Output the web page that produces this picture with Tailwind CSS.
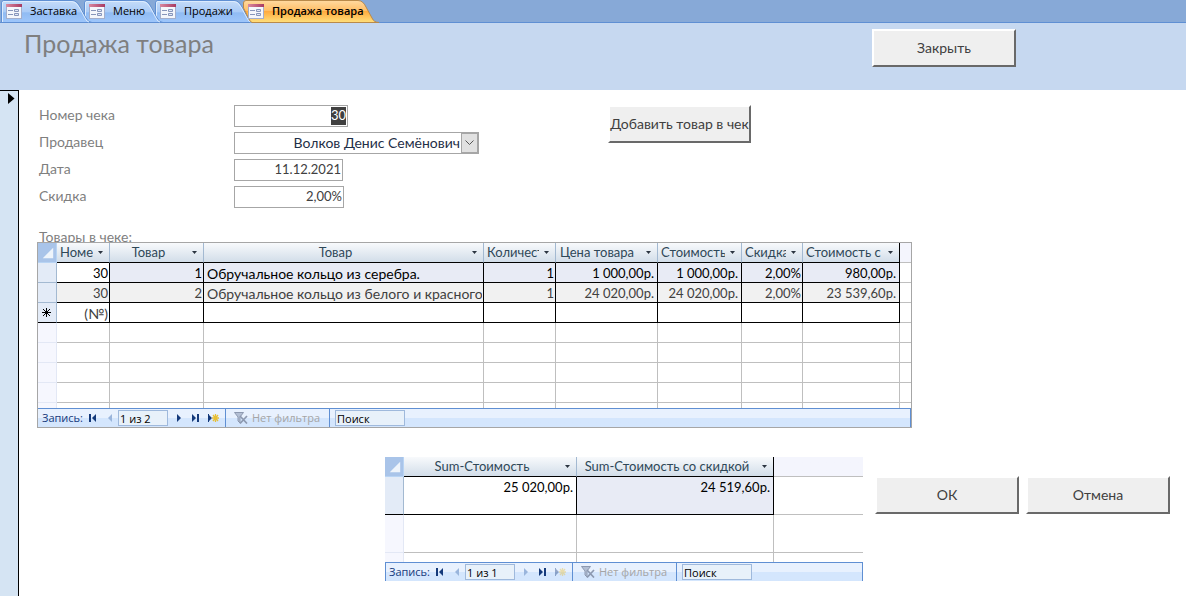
<!DOCTYPE html>
<html lang="ru">
<head>
<meta charset="utf-8">
<title>Продажа товара</title>
<script src="https://cdn.jsdelivr.net/npm/@tailwindcss/browser@4"></script>
</head>
<body class="min-h-screen flex flex-col bg-white text-sm text-[#404040] font-['Lato','Open_Sans',sans-serif]">

<svg class="absolute w-0 h-0" aria-hidden="true">
  <defs>
    <linearGradient id="blue" x1="0" y1="0" x2="0" y2="1"><stop offset="0" stop-color="#c6dcf8"/><stop offset=".5" stop-color="#a9cbf7"/><stop offset=".55" stop-color="#90bbf3"/><stop offset="1" stop-color="#9fc7fb"/></linearGradient>
    <linearGradient id="gold" x1="0" y1="0" x2="0" y2="1"><stop offset="0" stop-color="#ffd9a0"/><stop offset=".45" stop-color="#ffc069"/><stop offset=".5" stop-color="#ffab3f"/><stop offset="1" stop-color="#ffe07c"/></linearGradient>
    <linearGradient id="pink" x1="0" y1="0" x2="1" y2="0"><stop offset="0" stop-color="#d9889f"/><stop offset="1" stop-color="#a83a62"/></linearGradient>
  </defs>
  <symbol id="form" viewBox="0 0 16 15">
    <rect x=".5" y=".5" width="15" height="14" fill="#f4f6fb" stroke="#a3aecb"/>
    <rect x="0" y="0" width="16" height="3" fill="url(#pink)"/>
    <path d="M2 6.500h5M2 10.500h5" stroke="#8795ba"/>
    <path d="M8.500 5.500h4v2h-4zM8.500 9.500h4v2h-4z" fill="#dfe6f5" stroke="#8795ba"/>
  </symbol>
  <symbol id="drop" viewBox="0 0 7 4"><path d="M1 0h5L3.500 3z" fill="#2b3440"/></symbol>
  <symbol id="first" viewBox="0 0 7 8"><path d="M0 0h2v8H0zM7 0v8L3 4z" fill="currentColor"/></symbol>
  <symbol id="prev" viewBox="0 0 7 8"><path d="M5 0v8L1 4z" fill="currentColor"/></symbol>
  <symbol id="next" viewBox="0 0 7 8"><path d="M1 0v8l4-4z" fill="currentColor"/></symbol>
  <symbol id="last" viewBox="0 0 7 8"><path d="M5 0h2v8H5zM0 0v8l4-4z" fill="currentColor"/></symbol>
  <symbol id="new" viewBox="0 0 11 8"><path d="M0 0h1v8H0zM1 1v6l3-3z" fill="currentColor"/><path d="M7.500 0v8M4 4h7M5 1l5 6M10 1L5 7" stroke="#e8bf35" stroke-width="1.300"/></symbol>
  <symbol id="filter" viewBox="0 0 14 12"><path d="M.5.500h9L6 5v6L4 9V5z" fill="#b3bfd4" stroke="#8d99b0"/><path d="M6 4l7 7.500M13 4l-7 7.500" stroke="#8d99b0" stroke-width="1.700"/></symbol>
  <symbol id="corner" viewBox="0 0 19 20"><path d="M16 5v11H5z" fill="#eef4fb"/></symbol>
</svg>

<nav class="h-[23px] flex bg-[#87a9d7] border-b border-[#5f8fd3] text-[11px] text-black font-['Open_Sans','Noto_Sans',sans-serif]">
  <button class="relative z-30 ml-px w-[83px] h-[22px] flex items-center gap-2 pl-[5px]">
    <svg class="absolute left-0 top-0 w-[91px] h-[23px]" viewBox="0 0 91 23"><path d="M.5 23V3Q.5.500 3 .5H71Q76 .5 79 7L85 18Q87 22.500 91 22.500H.5Z" fill="url(#blue)" stroke="#5f8fd3"/><path d="M1.500 22V3Q1.500 1.500 3 1.500H71Q75 1.500 78 7L84 18Q86 22 88 22" fill="none" stroke="#dcebfd"/></svg>
    <svg class="relative w-4 h-[15px] shrink-0"><use href="#form"/></svg><span class="relative">Заставка</span>
  </button>
  <button class="relative z-20 w-[71px] h-[22px] flex items-center gap-2 pl-[5px]">
    <svg class="absolute left-0 top-0 w-[79px] h-[23px]" viewBox="0 0 79 23"><path d="M.5 23V3Q.5.500 3 .5H59Q64 .5 67 7L73 18Q75 22.500 79 22.500H.5Z" fill="url(#blue)" stroke="#5f8fd3"/><path d="M1.500 22V3Q1.500 1.500 3 1.500H59Q63 1.500 66 7L72 18Q74 22 76 22" fill="none" stroke="#dcebfd"/></svg>
    <svg class="relative w-4 h-[15px] shrink-0"><use href="#form"/></svg><span class="relative">Меню</span>
  </button>
  <button class="relative z-10 w-[88px] h-[22px] flex items-center gap-2 pl-[5px]">
    <svg class="absolute left-0 top-0 w-[98px] h-[23px]" viewBox="0 0 98 23"><path d="M.5 23V3Q.5.500 3 .5H79Q84 .5 87 7L93 18Q95 22.500 98 22.500H.5Z" fill="url(#blue)" stroke="#5f8fd3"/><path d="M1.500 22V3Q1.500 1.500 3 1.500H79Q83 1.500 86 7L92 18Q94 22 96 22" fill="none" stroke="#dcebfd"/></svg>
    <svg class="relative w-4 h-[15px] shrink-0"><use href="#form"/></svg><span class="relative">Продажи</span>
  </button>
  <button class="relative z-40 w-[136px] h-[22px] flex items-center gap-2 pl-[5px] font-semibold">
    <svg class="absolute left-0 top-0 w-[136px] h-[23px]" viewBox="0 0 136 23"><path d="M9 22.500Q7 22 5 17L.5 8V3Q.5.500 3 .5H115Q120 .5 123 7L129 18Q131 22.500 136 22.500Z" fill="url(#gold)" stroke="#b98a4a"/></svg>
    <svg class="relative w-4 h-[15px] shrink-0"><use href="#form"/></svg><span class="relative whitespace-nowrap">Продажа товара</span>
  </button>
</nav>

<header class="h-[67px] flex items-start justify-between bg-[#c6d8f0] pl-6 pr-[170px] pt-[6px]">
  <h1 class="text-[25px] leading-7 text-[#7f7f7f]">Продажа товара</h1>
  <button class="w-[144px] h-[38px] bg-[#efefef] border-2 border-t-white border-l-white border-r-[#696969] border-b-[#696969]">Закрыть</button>
</header>

<div class="flex-1 flex">
  <aside class="w-[19px] shrink-0 bg-[#d5e4f3] border-t border-r border-black pt-[2px] pl-2">
    <svg class="w-[7px] h-[11px]" viewBox="0 0 7 11"><path d="M0 0v11l6.500-5.500z" fill="#000"/></svg>
  </aside>

  <main class="flex-1 min-w-0 pt-[15px]">
    <form class="flex items-start pl-5">
      <div class="grid grid-cols-[195px_245px] auto-rows-[22px] gap-y-[5px] items-center text-[#7f7f7f] w-[569px] [&>label]:pb-[2px]">
        <label for="num">Номер чека</label>
        <div class="w-[114px] h-[22px] border border-[#a6a6a6] flex justify-end items-center pr-px"><input id="num" value="30" class="w-[15px] h-[18px] pb-px bg-[#404040] text-[13px] text-white text-right outline-none"></div>
        <label for="seller">Продавец</label>
        <div class="h-[22px] border border-[#a6a6a6] flex relative">
          <select id="seller" class="appearance-none flex-1 pr-[18px] pb-px text-right [text-align-last:right] text-[#1f2f47] outline-none"><option>Волков Денис Семёнович</option></select>
          <span class="absolute right-0 top-0 w-[17px] h-5 bg-[#e1e1e1] border border-[#a6a6a6] flex items-center justify-center pointer-events-none"><svg class="w-[9px] h-[6px]" viewBox="0 0 9 6"><path d="M.5.500l4 4 4-4" fill="none" stroke="#555"/></svg></span>
        </div>
        <label for="date">Дата</label>
        <input id="date" value="11.12.2021" class="w-[109px] h-[22px] border border-[#a6a6a6] text-[13px] text-right pr-px pb-[2px] text-[#404040]">
        <label for="disc">Скидка</label>
        <input id="disc" value="2,00%" class="w-[110px] h-[22px] border border-[#a6a6a6] text-[13px] text-right pr-px pb-[2px] text-[#404040]">
      </div>
      <button type="button" class="w-[143px] h-[38px] bg-[#efefef] border-2 border-t-white border-l-white border-r-[#696969] border-b-[#696969] whitespace-nowrap flex items-center justify-center">Добавить товар в чек</button>
    </form>

    <h2 class="mt-5 ml-5 h-[14px] leading-[18px] text-[#7f7f7f]">Товары в чеке:</h2>

    <section class="relative bg-white ml-[18px] mr-4 max-w-[875px] border border-[#a6a6a6]">
      <div class="h-[165px] overflow-hidden">
        <table class="w-full table-fixed border-separate border-spacing-0 leading-[19px] whitespace-nowrap [&_td]:p-0 [&_th]:p-0 [&_tr]:h-5 [&_td]:border-r [&_td]:border-b [&_th]:border-r [&_th]:border-b [&_th]:font-normal [&_td]:overflow-hidden [&_td]:text-right [&_td]:text-[13px] [&_td]:leading-[17px] [&_td]:pr-px [&_td]:pt-[2px]">
          <colgroup><col class="w-[19px]"><col class="w-[53px]"><col class="w-[94px]"><col class="w-[280px]"><col class="w-[72px]"><col class="w-[102px]"><col class="w-[84px]"><col class="w-[61px]"><col class="w-[97px]"><col></colgroup>
          <thead class="text-[13px] text-[#2f4858]">
            <tr class="[&>th]:border-b-black [&>th]:border-r-[#a3b9d1] [&>th]:bg-linear-to-b [&>th]:from-[#f8fafc] [&>th]:to-[#d2dde9]">
              <th class="!border-[#b8d4f4] !from-[#a9c4e9] !to-[#a9c4e9]"><svg class="w-[18px] h-[19px]"><use href="#corner"/></svg></th>
              <th><div class="flex items-center pl-[3px] pr-[5px]"><span class="flex-1 overflow-hidden text-left">Номер</span><svg class="ml-1 shrink-0 w-[7px] h-1"><use href="#drop"/></svg></div></th>
              <th><div class="flex items-center pr-[5px]"><span class="flex-1">Товар</span><svg class="ml-1 shrink-0 w-[7px] h-1"><use href="#drop"/></svg></div></th>
              <th><div class="flex items-center pr-[5px]"><span class="flex-1">Товар</span><svg class="ml-1 shrink-0 w-[7px] h-1"><use href="#drop"/></svg></div></th>
              <th><div class="flex items-center pl-[3px] pr-[5px]"><span class="flex-1 overflow-hidden text-left">Количество</span><svg class="ml-1 shrink-0 w-[7px] h-1"><use href="#drop"/></svg></div></th>
              <th><div class="flex items-center pl-[4px] pr-[5px]"><span class="flex-1 overflow-hidden text-left">Цена товара</span><svg class="ml-1 shrink-0 w-[7px] h-1"><use href="#drop"/></svg></div></th>
              <th><div class="flex items-center pl-[3px] pr-[5px]"><span class="flex-1 overflow-hidden text-left">Стоимость</span><svg class="ml-1 shrink-0 w-[7px] h-1"><use href="#drop"/></svg></div></th>
              <th><div class="flex items-center pl-[3px] pr-[5px]"><span class="flex-1 overflow-hidden text-left">Скидка</span><svg class="ml-1 shrink-0 w-[7px] h-1"><use href="#drop"/></svg></div></th>
              <th class="!border-r-black"><div class="flex items-center pl-[3px] pr-[5px]"><span class="flex-1 overflow-hidden text-left">Стоимость с</span><svg class="ml-1 shrink-0 w-[7px] h-1"><use href="#drop"/></svg></div></th>
              <th class="!border-r-0 !border-b-[#bfbfbf] !from-[#f4f5fd] !to-[#f4f5fd]"></th>
            </tr>
          </thead>
          <tbody class="[&_td]:border-black [&_td:first-child]:border-b-[#a3b9d1] [&_td:first-child]:border-r-[#a3b9d1] [&_td:first-child]:bg-[#e3ebf7] [&_td:last-child]:border-r-0 [&_td:last-child]:border-b-[#bfbfbf] [&_td:last-child]:bg-white">
            <tr class="text-black bg-[#e8ebf5]"><td></td><td class="bg-white">30</td><td>1</td><td><div class="pl-[3px] text-sm leading-4 text-left overflow-hidden">Обручальное кольцо из серебра.</div></td><td>1</td><td class="!pr-[3px]">1 000,00р.</td><td class="!pr-[3px]">1 000,00р.</td><td>2,00%</td><td class="!pr-[3px]">980,00р.</td><td></td></tr>
            <tr class="bg-[#f1f1f1]"><td></td><td>30</td><td>2</td><td><div class="pl-[3px] text-sm leading-4 text-left overflow-hidden">Обручальное кольцо из белого и красного золота</div></td><td>1</td><td class="!pr-[3px]">24 020,00р.</td><td class="!pr-[3px]">24 020,00р.</td><td>2,00%</td><td class="!pr-[3px]">23 539,60р.</td><td></td></tr>
            <tr><td class="!border-b-black !pt-0"><svg class="mx-auto w-[9px] h-[9px]" viewBox="0 0 9 9"><path d="M4.500 0v9M0 4.500h9M1 1l7 7M8 1L1 8" stroke="#000"/></svg></td><td class="!text-sm !leading-4">(№)</td><td></td><td></td><td></td><td></td><td></td><td></td><td></td><td></td></tr>
          </tbody>
          <tbody class="[&_td]:border-[#bfbfbf] [&_td:first-child]:border-[#e3e8f5] [&_td:first-child]:bg-[#f6f7fe] [&_td:last-child]:border-r-0">
            <tr><td></td><td></td><td></td><td></td><td></td><td></td><td></td><td></td><td></td><td></td></tr>
            <tr><td></td><td></td><td></td><td></td><td></td><td></td><td></td><td></td><td></td><td></td></tr>
            <tr><td></td><td></td><td></td><td></td><td></td><td></td><td></td><td></td><td></td><td></td></tr>
            <tr><td></td><td></td><td></td><td></td><td></td><td></td><td></td><td></td><td></td><td></td></tr>
            <tr><td></td><td></td><td></td><td></td><td></td><td></td><td></td><td></td><td></td><td></td></tr>
          </tbody>
        </table>
      </div>
      <div class="h-[19px] flex items-stretch border-t border-r border-[#5f8fd3] bg-linear-to-b from-[#e8f1fe] from-50% to-[#d4e6fd] to-50% text-[11px] font-['Open_Sans','Noto_Sans',sans-serif]">
        <div class="w-[188px] flex items-center border-r border-[#5f8fd3] pl-[4px] text-[#153a7b]">
          <span class="w-[47px]">Запись:</span>
          <button class="w-[18px]" aria-label="Первая"><svg class="w-[7px] h-2"><use href="#first"/></svg></button>
          <button class="w-[11px] text-[#9ab5dc]" aria-label="Предыдущая"><svg class="w-[7px] h-2"><use href="#prev"/></svg></button>
          <input value="1 из 2" aria-label="Номер записи" class="w-[50px] h-4 bg-[#e8f1fa] border border-[#9fb9dc] pl-px text-black">
          <button class="ml-2 w-4" aria-label="Следующая"><svg class="w-[7px] h-2"><use href="#next"/></svg></button>
          <button class="w-4" aria-label="Последняя"><svg class="w-[7px] h-2"><use href="#last"/></svg></button>
          <button aria-label="Новая"><svg class="w-[11px] h-2"><use href="#new"/></svg></button>
        </div>
        <button class="w-[104px] flex items-center gap-1 border-r border-[#5f8fd3] pl-2 text-[#a5a5a5] whitespace-nowrap"><svg class="w-[14px] h-3 shrink-0"><use href="#filter"/></svg>Нет фильтра</button>
        <input value="Поиск" aria-label="Поиск" class="ml-[5px] mt-px w-[70px] h-4 bg-[#e8f1fa] border border-[#9fb9dc] pl-px text-black">
      </div>
    </section>

    <div class="mt-[29px] ml-[366px] flex items-start">
      <section class="w-[478px]">
        <div class="h-[105px] overflow-hidden">
          <table class="w-full table-fixed border-separate border-spacing-0 leading-[19px] whitespace-nowrap [&_td]:p-0 [&_th]:p-0 [&_td]:h-[38px] [&_th]:h-5 [&_td]:border-r [&_td]:border-b [&_th]:border-r [&_th]:border-b [&_th]:font-normal [&_td]:align-top [&_td]:text-right [&_td]:text-[13px]">
            <colgroup><col class="w-[19px]"><col class="w-[173px]"><col class="w-[197px]"><col></colgroup>
            <thead class="text-[13px] text-[#2f4858]">
              <tr class="[&>th]:border-b-black [&>th]:border-r-[#a3b9d1] [&>th]:bg-linear-to-b [&>th]:from-[#f8fafc] [&>th]:to-[#d2dde9]">
                <th class="!border-[#b8d4f4] !from-[#a9c4e9] !to-[#a9c4e9]"><svg class="w-[18px] h-[19px]"><use href="#corner"/></svg></th>
                <th><div class="flex items-center pr-[5px]"><span class="flex-1">Sum-Стоимость</span><svg class="ml-1 shrink-0 w-[7px] h-1"><use href="#drop"/></svg></div></th>
                <th class="!border-r-black"><div class="flex items-center pr-[5px]"><span class="flex-1">Sum-Стоимость со скидкой</span><svg class="ml-1 shrink-0 w-[7px] h-1"><use href="#drop"/></svg></div></th>
                <th class="!border-r-0 !border-b-[#bfbfbf] !from-[#f4f5fd] !to-[#f4f5fd]"></th>
              </tr>
            </thead>
            <tbody class="text-black">
              <tr><td class="bg-[#e3ebf7] border-r-[#a3b9d1] border-b-black"></td><td class="border-black !pr-[3px]"><div class="pt-px">25 020,00р.</div></td><td class="border-black bg-[#e8ebf5] !pr-[3px]"><div class="pt-px">24 519,60р.</div></td><td class="border-[#bfbfbf] !border-r-0"></td></tr>
            </tbody>
            <tbody class="[&_td]:border-[#bfbfbf] [&_td:first-child]:border-[#e3e8f5] [&_td:first-child]:bg-[#f6f7fe] [&_td:last-child]:border-r-0">
              <tr><td></td><td></td><td></td><td></td></tr>
              <tr><td></td><td></td><td></td><td></td></tr>
            </tbody>
          </table>
        </div>
        <div class="h-[19px] flex items-stretch border-t border-x border-[#5f8fd3] bg-linear-to-b from-[#e8f1fe] from-50% to-[#d4e6fd] to-50% text-[11px] font-['Open_Sans','Noto_Sans',sans-serif]">
          <div class="w-[187px] flex items-center border-r border-[#5f8fd3] pl-[3px] text-[#153a7b]">
            <span class="w-[47px]">Запись:</span>
            <button class="w-[18px]" aria-label="Первая"><svg class="w-[7px] h-2"><use href="#first"/></svg></button>
            <button class="w-[11px] text-[#9ab5dc]" aria-label="Предыдущая"><svg class="w-[7px] h-2"><use href="#prev"/></svg></button>
            <input value="1 из 1" aria-label="Номер записи" class="w-[50px] h-4 bg-[#e8f1fa] border border-[#9fb9dc] pl-px text-black">
            <button class="ml-2 w-4 text-[#9ab5dc]" aria-label="Следующая"><svg class="w-[7px] h-2"><use href="#next"/></svg></button>
            <button class="w-4" aria-label="Последняя"><svg class="w-[7px] h-2"><use href="#last"/></svg></button>
            <button class="opacity-40" aria-label="Новая"><svg class="w-[11px] h-2"><use href="#new"/></svg></button>
          </div>
          <button class="w-[104px] flex items-center gap-1 border-r border-[#5f8fd3] pl-2 text-[#a5a5a5] whitespace-nowrap"><svg class="w-[14px] h-3 shrink-0"><use href="#filter"/></svg>Нет фильтра</button>
          <input value="Поиск" aria-label="Поиск" class="ml-[5px] mt-px w-[70px] h-4 bg-[#e8f1fa] border border-[#9fb9dc] pl-px text-black">
        </div>
      </section>
      <div class="ml-3 mt-[19px] flex gap-[7px]">
        <button class="w-[144px] h-[38px] bg-[#efefef] border-2 border-t-white border-l-white border-r-[#696969] border-b-[#696969]">ОК</button>
        <button class="w-[144px] h-[38px] bg-[#efefef] border-2 border-t-white border-l-white border-r-[#696969] border-b-[#696969]">Отмена</button>
      </div>
    </div>
  </main>
</div>
</body>
</html>
